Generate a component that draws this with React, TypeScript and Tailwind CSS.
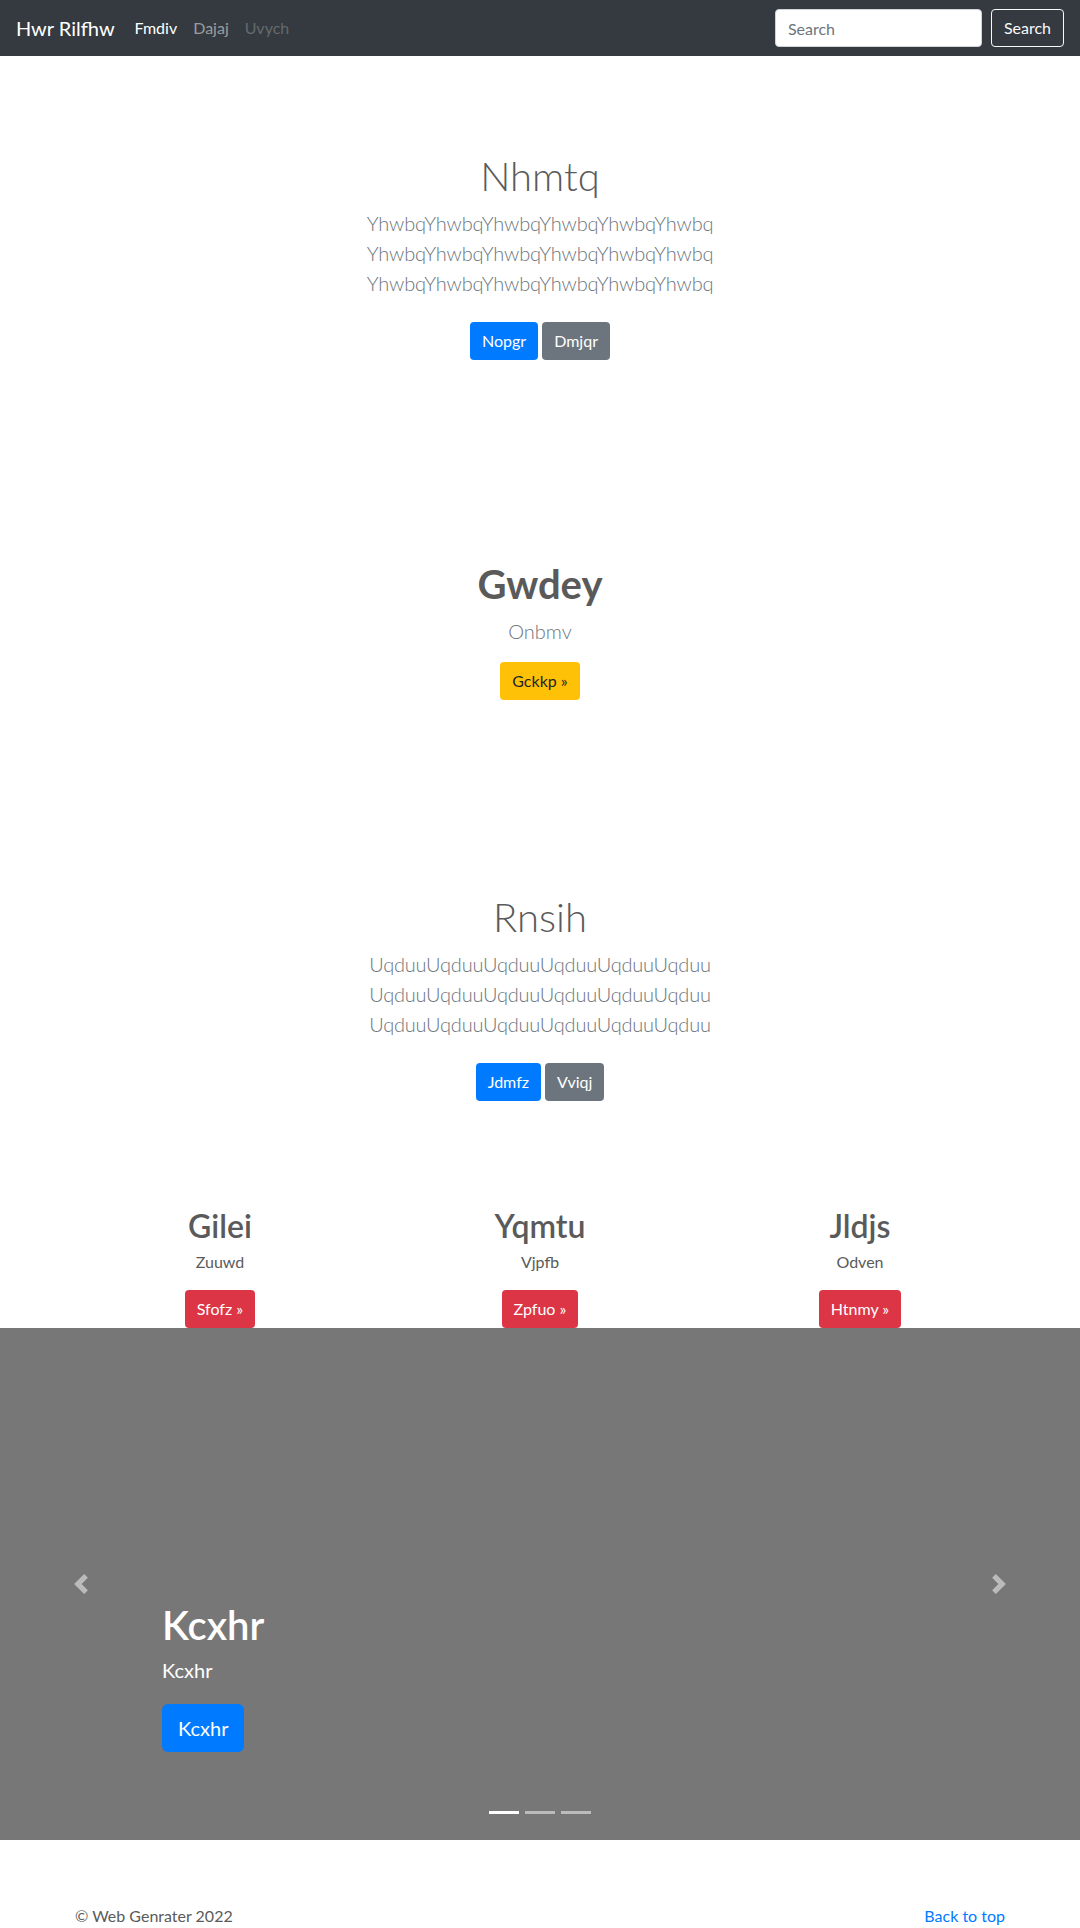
const Btn = ({ label, color }: { label: string; color: string }) => (
  <a href="#" className={`h-[38px] px-3 inline-flex items-center rounded text-base ${color}`}>
    {label}
  </a>
);

const Navbar = () => (
  <nav className="h-14 bg-[#343a40] flex items-center px-4">
    <a href="#" className="text-xl text-white mr-3 leading-[30px]">Hwr Rilfhw</a>
    <ul className="flex text-base">
      <li><a href="#" className="px-2 text-white">Fmdiv</a></li>
      <li><a href="#" className="px-2 text-white/50">Dajaj</a></li>
      <li><a href="#" className="px-2 text-white/25">Uvych</a></li>
    </ul>
    <form className="ml-auto flex items-center gap-[9px]">
      <input
        type="text"
        placeholder="Search"
        className="w-[207px] h-[38px] px-3 rounded bg-white border border-[#ced4da] text-base text-[#495057] placeholder:text-[#6c757d] outline-none"
      />
      <button type="button" className="h-[38px] px-3 rounded border border-[#f8f9fa] text-[#f8f9fa] text-base">
        Search
      </button>
    </form>
  </nav>
);

const Lead = ({ word }: { word: string }) => (
  <p className="mt-2 text-[20px] leading-[30px] font-light tracking-[-0.2px] text-[#6c757d]">
    {word.repeat(6)}
    <br />
    {word.repeat(6)}
    <br />
    {word.repeat(6)}
  </p>
);

const Chevron = ({ dir }: { dir: "prev" | "next" }) => (
  <svg className="w-5 h-5" viewBox="0 0 8 8" fill="#fff">
    {dir === "prev" ? (
      <path d="M5.25 0l-4 4 4 4 1.5-1.5-2.5-2.5 2.5-2.5-1.5-1.5z" />
    ) : (
      <path d="M2.75 0l-1.5 1.5 2.5 2.5-2.5 2.5 1.5 1.5 4-4-4-4z" />
    )}
  </svg>
);

const features = [
  { title: "Gilei", text: "Zuuwd", btn: "Sfofz »" },
  { title: "Yqmtu", text: "Vjpfb", btn: "Zpfuo »" },
  { title: "Jldjs", text: "Odven", btn: "Htnmy »" },
];

export default function App() {
  return (
    <div className="font-['Lato',sans-serif] text-[#5a5a5a] bg-white min-h-[1928px]">
      <Navbar />

      {/* hero */}
      <section className="pt-24 text-center">
        <h1 className="text-[40px] leading-[48px] font-light">Nhmtq</h1>
        <Lead word="Yhwbq" />
        <div className="mt-6 flex justify-center gap-1 text-white">
          <Btn label="Nopgr" color="bg-[#007bff]" />
          <Btn label="Dmjqr" color="bg-[#6c757d]" />
        </div>
      </section>

      <section className="mt-[200px] text-center">
        <h1 className="text-[40px] leading-[48px] font-bold">Gwdey</h1>
        <p className="mt-2 text-[20px] leading-[30px] font-light text-[#6c757d]">Onbmv</p>
        <div className="mt-4 flex justify-center">
          <Btn label="Gckkp »" color="bg-[#ffc107] text-[#212529]" />
        </div>
      </section>

      <section className="mt-[193px] text-center">
        <h1 className="text-[40px] leading-[48px] font-light">Rnsih</h1>
        <Lead word="Uqduu" />
        <div className="mt-6 flex justify-center gap-1 text-white">
          <Btn label="Jdmfz" color="bg-[#007bff]" />
          <Btn label="Vviqj" color="bg-[#6c757d]" />
        </div>
      </section>

      <section className="w-[960px] mx-auto mt-[106px] grid grid-cols-3 text-center">
        {features.map((f) => (
          <div key={f.title} className="px-[15px]">
            <h2 className="text-[32px] leading-[38px] font-semibold">{f.title}</h2>
            <p className="mt-[5px] text-base leading-6">{f.text}</p>
            <div className="mt-4 flex justify-center text-white">
              <Btn label={f.btn} color="bg-[#dc3545]" />
            </div>
          </div>
        ))}
      </section>

      {/* carousel */}
      <section className="relative h-[512px] bg-[#777777] mb-16">
        <a href="#" className="absolute left-0 top-0 bottom-0 w-[15%] flex items-center justify-center opacity-50">
          <Chevron dir="prev" />
        </a>
        <a href="#" className="absolute right-0 top-0 bottom-0 w-[15%] flex items-center justify-center opacity-50">
          <Chevron dir="next" />
        </a>
        <div className="absolute left-[15%] right-[15%] bottom-[88px] text-white">
          <h1 className="text-[40px] leading-[48px] font-semibold">Kcxhr</h1>
          <p className="mt-[6px] text-[20px] leading-[30px]">Kcxhr</p>
          <a href="#" className="mt-[19px] h-12 px-4 inline-flex items-center rounded-md bg-[#007bff] text-[20px]">
            Kcxhr
          </a>
        </div>
        <div className="absolute bottom-[26px] left-0 right-0 flex justify-center gap-[6px]">
          <span className="w-[30px] h-[3px] bg-white" />
          <span className="w-[30px] h-[3px] bg-white/50" />
          <span className="w-[30px] h-[3px] bg-white/50" />
        </div>
      </section>

      <footer className="w-[960px] mx-auto px-[15px] flex justify-between text-base leading-6">
        <p>© Web Genrater 2022</p>
        <a href="#" className="text-[#007bff]">Back to top</a>
      </footer>
    </div>
  );
}
